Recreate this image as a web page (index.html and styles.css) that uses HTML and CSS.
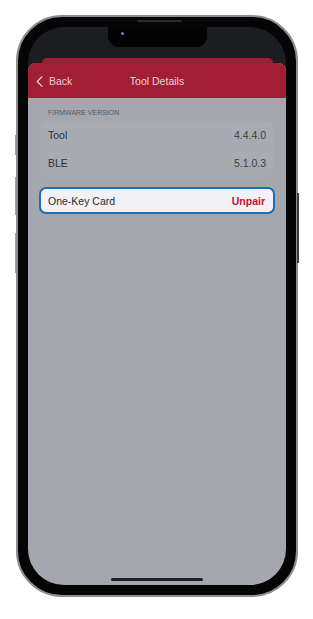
FILE: index.html
```html
<!DOCTYPE html>
<html lang="en">
<head>
    <meta charset="UTF-8">
    <meta name="viewport" content="width=device-width, initial-scale=1.0">
    <title>Tool Details</title>
    <link rel="stylesheet" href="styles.css">
</head>
<body>
    <div class="phone">
        <span class="side-btn mute"></span>
        <span class="side-btn vol-up"></span>
        <span class="side-btn vol-down"></span>
        <span class="side-btn power"></span>
        <span class="speaker"></span>

        <div class="screen">
            <div class="notch"><span class="camera"></span></div>
            <div class="status"></div>
            <div class="sheet-back"></div>
            <div class="sheet">
                <div class="nav">
                    <a href="#" class="back">
                        <svg width="7" height="11" viewBox="0 0 7 11"><path d="M6 0.8 L1.2 5.5 L6 10.2" fill="none" stroke="currentColor" stroke-width="1.2" stroke-linecap="round" stroke-linejoin="round"/></svg>
                        Back
                    </a>
                    <h1>Tool Details</h1>
                </div>

                <div class="content">
                    <p class="section-label">FIRMWARE VERSION</p>
                    <div class="group">
                        <div class="row">
                            <span>Tool</span>
                            <span class="value">4.4.4.0</span>
                        </div>
                        <div class="row">
                            <span>BLE</span>
                            <span class="value">5.1.0.3</span>
                        </div>
                    </div>

                    <div class="card-row">
                        <span>One-Key Card</span>
                        <a href="#" class="unpair">Unpair</a>
                    </div>
                </div>

                <div class="home-bar"></div>
            </div>
        </div>
    </div>
</body>
</html>
```

FILE: styles.css
```css
body {
    margin: 0;
    background-color: #fff;
    font-family: "Liberation Sans", Arial, sans-serif;
}

.phone {
    position: relative;
    width: 258px;
    height: 558px;
    margin: 15px 0 0 16px;
    padding: 10px;
    border: 2px solid #8d8e92;
    border-radius: 46px;
    background-color: #050505;
    display: flex;
}

.side-btn {
    position: absolute;
    width: 1px;
    background-color: #a0a1a5;
}

.mute { left: -3px; top: 118px; height: 20px; }
.vol-up { left: -3px; top: 160px; height: 38px; }
.vol-down { left: -3px; top: 216px; height: 40px; }
.power { right: -3px; top: 176px; height: 70px; background-color: #3a3b3e; width: 2px; }

.speaker {
    position: absolute;
    top: 3px;
    left: 119px;
    width: 45px;
    height: 2px;
    border-radius: 1px;
    background-color: #2c2c2e;
}

.screen {
    position: relative;
    flex: 1;
    display: flex;
    flex-direction: column;
    border-radius: 36px;
    overflow: hidden;
    background-color: #1c1d21;
}

.notch {
    position: absolute;
    top: 0;
    left: 80px;
    width: 99px;
    height: 20px;
    background-color: #030303;
    border-radius: 0 0 11px 11px;
}

.camera {
    position: absolute;
    top: 5px;
    left: 13px;
    width: 3px;
    height: 3px;
    border-radius: 50%;
    background-color: #6f7ec9;
}

.status {
    height: 31px;
}

.sheet-back {
    height: 5px;
    margin: 0 13px 0 14px;
    border-radius: 6px 6px 0 0;
    background-color: #9f1d33;
}

.sheet {
    flex: 1;
    display: flex;
    flex-direction: column;
    border-radius: 8px 8px 0 0;
    overflow: hidden;
    background-color: #a5a7af;
}

.nav {
    position: relative;
    height: 35px;
    display: flex;
    align-items: center;
    justify-content: center;
    padding-top: 1px;
    box-sizing: border-box;
    background-color: #a21e35;
}

.back {
    position: absolute;
    left: 8px;
    top: 12px;
    display: flex;
    align-items: center;
    gap: 6px;
    color: rgba(255, 255, 255, 0.78);
    font-size: 10.5px;
    text-decoration: none;
}

.nav h1 {
    margin: 0;
    font-size: 10.5px;
    font-weight: normal;
    color: rgba(255, 255, 255, 0.82);
}

.content {
    flex: 1;
    padding: 11px 13px 0 12px;
}

.section-label {
    margin: 0 0 5px 8px;
    font-size: 7px;
    color: #55575d;
}

.group {
    border-radius: 6px;
    background-color: #a9abb3;
    padding: 0 7px 0 8px;
}

.row {
    height: 28px;
    display: flex;
    align-items: center;
    justify-content: space-between;
    font-size: 10.5px;
    color: #2f3034;
}

.row .value {
    color: #3e3f44;
}

.card-row {
    height: 23px;
    margin: 10px -2px 0 -1px;
    padding: 0 8px 0 7px;
    display: flex;
    align-items: center;
    justify-content: space-between;
    border: 2px solid #1f6cb3;
    border-radius: 7px;
    background-color: #f1f1f6;
    font-size: 10.5px;
    color: #2a2a2e;
}

.unpair {
    color: #c8102e;
    font-weight: bold;
    text-decoration: none;
}

.home-bar {
    width: 92px;
    height: 3px;
    margin: 0 auto 4px;
    border-radius: 2px;
    background-color: #1d1f29;
}
```
